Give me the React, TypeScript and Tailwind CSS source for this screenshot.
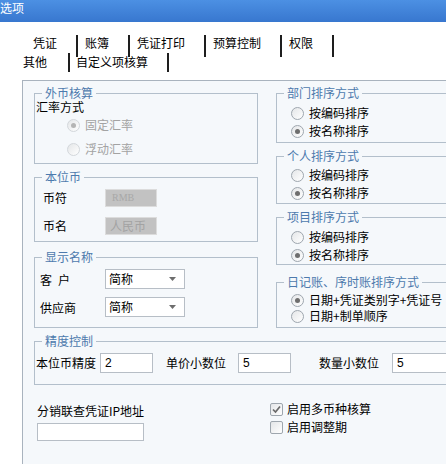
import type { ReactNode } from "react";

function Radio({ checked, disabled }: { checked?: boolean; disabled?: boolean }) {
  return (
    <span
      className={`flex h-[13px] w-[13px] shrink-0 items-center justify-center rounded-full border bg-gradient-to-br from-[#e4e6e8] to-white ${
        disabled ? "border-[#d3d7db]" : "border-[#9ea6ae]"
      }`}
    >
      {checked && (
        <span className={`h-[5px] w-[5px] rounded-full ${disabled ? "bg-[#b4b4b4]" : "bg-[#6e6e6e]"}`} />
      )}
    </span>
  );
}

function Check({ checked }: { checked?: boolean }) {
  return (
    <span className="flex h-[13px] w-[13px] shrink-0 items-center justify-center rounded-[2px] border border-[#9ea6ae] bg-gradient-to-br from-[#e4e6e8] to-white">
      {checked && (
        <svg width="11" height="11" viewBox="0 0 11 11">
          <path d="M2 5.5 L4.5 8 L9 2.5" fill="none" stroke="#6a6a6a" strokeWidth="1.7" />
        </svg>
      )}
    </span>
  );
}

function Group({ title, className, children }: { title: string; className: string; children?: ReactNode }) {
  return (
    <div className={`relative border border-[#b3bfcb] ${className}`}>
      <span className="absolute left-[7px] top-[-7px] bg-[#f5f8fb] px-[3px] leading-[12px] text-[#4d7aad]">
        {title}
      </span>
      {children}
    </div>
  );
}

function Opt({ label, checked, h = "h-[18px]" }: { label: string; checked?: boolean; h?: string }) {
  return (
    <div className={`flex items-center gap-[5px] whitespace-nowrap ${h}`}>
      <Radio checked={checked} />
      {label}
    </div>
  );
}

function Select() {
  return (
    <div className="flex h-[20px] w-[80px] items-center justify-between border border-[#b7bec6] bg-white pl-[3px] pr-[8px]">
      <span>简称</span>
      <svg width="7" height="4" viewBox="0 0 7 4">
        <path d="M0 0 H7 L3.5 4 Z" fill="#6d6d6d" />
      </svg>
    </div>
  );
}

function NumInput({ value, w }: { value: string; w: string }) {
  return (
    <div className={`flex h-[20px] items-center border border-[#b7bec6] bg-white pl-[4px] font-['Liberation_Sans',sans-serif] ${w}`}>
      {value}
    </div>
  );
}

export default function App() {
  const tabs1 = ["凭证", "账簿", "凭证打印", "预算控制", "权限"];

  return (
    <div className="h-[464px] w-[446px] overflow-hidden bg-white font-['Noto_Sans_CJK_SC',sans-serif] text-[12px] leading-[14px] text-black">
      {/* title bar */}
      <div className="h-[22px] bg-gradient-to-b from-[#4c90e3] to-[#3877cf] pt-[1px] text-white">选项</div>

      {/* tabs */}
      <div className="h-[58px] pt-[13px]">
        <div className="flex h-[18px] items-start pl-[33px]">
          {tabs1.map((t) => (
            <div key={t} className="flex items-start">
              <span className="mt-[1px] whitespace-nowrap">{t}</span>
              <span className="ml-[19px] mr-[7px] h-[22px] w-[2px] bg-[#1e1e1e]" />
            </div>
          ))}
        </div>
        <div className="flex h-[19px] items-start pl-[23px]">
          <span className="mt-[2px]">其他</span>
          <span className="ml-[21px] mr-[6px] h-[19px] w-[2px] bg-[#1e1e1e]" />
          <span className="mt-[2px] whitespace-nowrap">自定义项核算</span>
          <span className="ml-[19px] h-[19px] w-[2px] bg-[#1e1e1e]" />
        </div>
      </div>

      {/* panel */}
      <div className="ml-[22px] h-[384px] w-[600px] border-l border-t border-[#a9b3be] bg-[#f5f8fb] pl-[11px] pt-[12px]">
        <div className="flex">
          {/* left column */}
          <div className="flex w-[224px] flex-col">
            <Group title="外币核算" className="h-[71px]">
              <div className="pl-[1px] pt-[6px]">
                <div>汇率方式</div>
                <div className="mt-[3px] flex flex-col gap-[8px] pl-[31px] text-[#a3a3a3]">
                  <div className="flex h-[16px] items-center gap-[5px]">
                    <Radio checked disabled />
                    固定汇率
                  </div>
                  <div className="flex h-[16px] items-center gap-[5px]">
                    <Radio disabled />
                    浮动汇率
                  </div>
                </div>
              </div>
            </Group>

            <Group title="本位币" className="mt-[13px] h-[65px]">
              <div className="pl-[8px] pt-[11px]">
                <div className="flex h-[18px] items-center">
                  <span className="w-[62px]">币符</span>
                  <div className="flex h-[18px] w-[52px] items-center border border-[#dcdcdc] bg-[#c2c2c2] pl-[6px] font-['Liberation_Serif',serif] text-[10px] text-[#a8a8a8]">
                    RMB
                  </div>
                </div>
                <div className="mt-[10px] flex h-[18px] items-center">
                  <span className="w-[62px]">币名</span>
                  <div className="flex h-[18px] w-[52px] items-center border border-[#dcdcdc] bg-[#c2c2c2] pl-[4px] text-[#a3a3a3]">
                    人民币
                  </div>
                </div>
              </div>
            </Group>

            <Group title="显示名称" className="mt-[15px] h-[71px]">
              <div className="pl-[5px] pt-[11px]">
                <div className="flex h-[20px] items-start">
                  <span className="mt-[4px] w-[65px]">
                    客<span className="ml-[6px]">户</span>
                  </span>
                  <Select />
                </div>
                <div className="mt-[8px] flex h-[20px] items-start">
                  <span className="mt-[4px] w-[65px]">供应商</span>
                  <Select />
                </div>
              </div>
            </Group>
          </div>

          {/* right column */}
          <div className="ml-[18px] flex w-[240px] flex-col">
            <Group title="部门排序方式" className="h-[50px]">
              <div className="pl-[14px] pt-[10px]">
                <Opt label="按编码排序" />
                <Opt label="按名称排序" checked />
              </div>
            </Group>
            <Group title="个人排序方式" className="mt-[13px] h-[48px]">
              <div className="pl-[14px] pt-[9px]">
                <Opt label="按编码排序" />
                <Opt label="按名称排序" checked />
              </div>
            </Group>
            <Group title="项目排序方式" className="mt-[13px] h-[48px]">
              <div className="pl-[14px] pt-[10px]">
                <Opt label="按编码排序" />
                <Opt label="按名称排序" checked />
              </div>
            </Group>
            <Group title="日记账、序时账排序方式" className="mt-[17px] h-[46px]">
              <div className="pl-[14px] pt-[9px]">
                <Opt label="日期+凭证类别字+凭证号" checked h="h-[16px]" />
                <Opt label="日期+制单顺序" h="h-[16px]" />
              </div>
            </Group>
          </div>
        </div>

        {/* precision */}
        <Group title="精度控制" className="mt-[13px] h-[44px] w-[540px]">
          <div className="mt-[11px] flex h-[20px] items-center whitespace-nowrap pl-[1px]">
            <span>本位币精度</span>
            <div className="ml-[4px]">
              <NumInput value="2" w="w-[53px]" />
            </div>
            <span className="ml-[13px]">单价小数位</span>
            <div className="ml-[12px]">
              <NumInput value="5" w="w-[53px]" />
            </div>
            <span className="ml-[28px]">数量小数位</span>
            <div className="ml-[13px]">
              <NumInput value="5" w="w-[60px]" />
            </div>
          </div>
        </Group>

        {/* bottom */}
        <div className="flex">
          <div className="ml-[3px] w-[233px] pt-[19px]">
            <div className="whitespace-nowrap">分销联查凭证IP地址</div>
            <div className="mt-[5px] h-[18px] w-[107px] border border-[#b7bec6] bg-white" />
          </div>
          <div className="pt-[15px]">
            <div className="flex h-[18px] items-center gap-[4px]">
              <Check checked />
              启用多币种核算
            </div>
            <div className="flex h-[18px] items-center gap-[4px]">
              <Check />
              启用调整期
            </div>
          </div>
        </div>
      </div>
    </div>
  );
}
